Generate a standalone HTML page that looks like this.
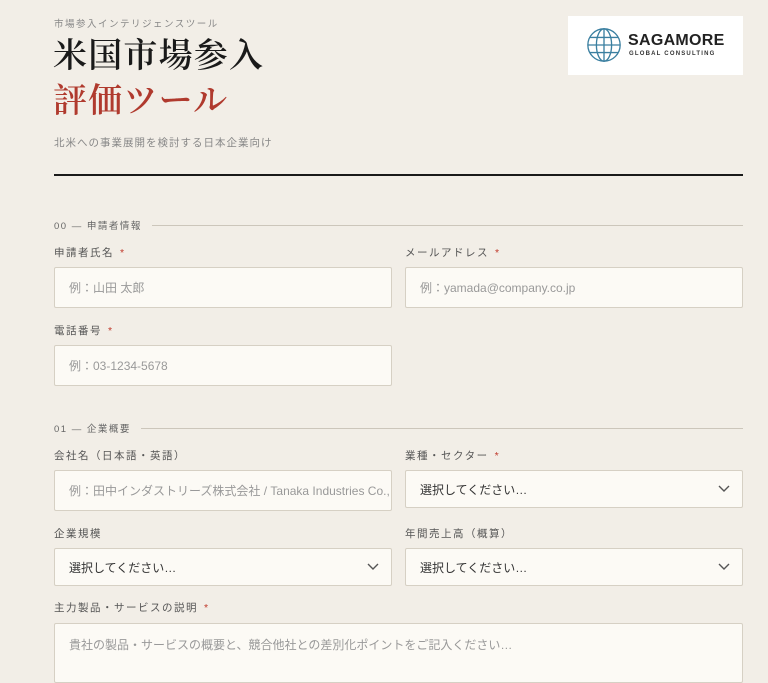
<!DOCTYPE html>
<html><head><meta charset="utf-8"><style>
*{box-sizing:border-box;margin:0;padding:0}
body{width:768px;height:649px;overflow:hidden;background:#f2eee7;font-family:"Liberation Sans","Noto Sans CJK JP",sans-serif;color:#1a1a1a;position:relative}
.a{position:absolute}
.sub{left:54px;top:16px;font-size:9.5px;color:#888;letter-spacing:1.5px}
.t{left:53px;font-family:"Liberation Serif","Noto Serif CJK SC",serif;font-size:34px;font-weight:600;letter-spacing:1.2px;line-height:40px}
.desc{left:54px;top:135px;font-size:10.5px;color:#888;letter-spacing:1px}
.rule{left:54px;top:174px;width:689px;height:2px;background:#1a1a1a}
.logo{left:568px;top:16px;width:175px;height:59px;background:#fff}
.sec{left:54px;font-size:9.5px;color:#666;letter-spacing:1.5px;display:flex;align-items:center;width:689px}
.sec::after{content:"";flex:1;height:1px;background:#ccc6bb;margin-left:10px}
.lab{font-size:10.5px;color:#555;letter-spacing:1.5px}
.lab b{color:#c0392b;font-weight:normal;margin-left:6px}
.in{background:#fcfaf5;border:1px solid #d6d0c4;border-radius:2px;font-size:12px;color:#999;padding-left:14px;display:flex;align-items:center;overflow:hidden;white-space:nowrap}
.sel{color:#333}
.sel svg{position:absolute;right:12px}
</style></head><body>
<div class="a sub">市場参入インテリジェンスツール</div>
<div class="a t" style="top:37px">米国市場参入</div>
<div class="a t" style="top:82px;color:#b03a2e">評価ツール</div>
<div class="a desc">北米への事業展開を検討する日本企業向け</div>
<div class="a rule"></div>
<div class="a logo">
<svg width="38" height="38" viewBox="0 0 40 40" style="position:absolute;left:17px;top:10px" fill="none" stroke="#3a7fa0" stroke-width="1.4"><circle cx="20" cy="20" r="17"/><ellipse cx="20" cy="20" rx="8" ry="17"/><line x1="20" y1="3" x2="20" y2="37"/><path d="M5 12h30M3 20h34M5 28h30"/></svg>
<div class="a" style="left:60px;top:16px;font-size:16px;font-weight:600;color:#222;letter-spacing:0.3px">SAGAMORE</div>
<div class="a" style="left:61px;top:35px;font-size:6px;font-weight:bold;color:#333;letter-spacing:1.2px">GLOBAL CONSULTING</div>
</div>
<div class="a sec" style="top:218px">00 — 申請者情報</div>
<div class="a lab" style="left:54px;top:245px">申請者氏名<b>*</b></div>
<div class="a lab" style="left:405px;top:245px">メールアドレス<b>*</b></div>
<div class="a in" style="left:54px;top:267px;width:338px;height:41px">例：山田 太郎</div>
<div class="a in" style="left:405px;top:267px;width:338px;height:41px">例：yamada@company.co.jp</div>
<div class="a lab" style="left:54px;top:323px">電話番号<b>*</b></div>
<div class="a in" style="left:54px;top:345px;width:338px;height:41px">例：03-1234-5678</div>
<div class="a sec" style="top:421px">01 — 企業概要</div>
<div class="a lab" style="left:54px;top:448px">会社名（日本語・英語）</div>
<div class="a lab" style="left:405px;top:448px">業種・セクター<b>*</b></div>
<div class="a in" style="left:54px;top:470px;width:338px;height:41px">例：田中インダストリーズ株式会社 / Tanaka Industries Co., Ltd.</div>
<div class="a in sel" style="left:405px;top:470px;width:338px;height:38px">選択してください…<svg width="12" height="8" viewBox="0 0 12 8"><path d="M1 1l5 5 5-5" stroke="#555" stroke-width="1.4" fill="none"/></svg></div>
<div class="a lab" style="left:54px;top:526px">企業規模</div>
<div class="a lab" style="left:405px;top:526px">年間売上高（概算）</div>
<div class="a in sel" style="left:54px;top:548px;width:338px;height:38px">選択してください…<svg width="12" height="8" viewBox="0 0 12 8"><path d="M1 1l5 5 5-5" stroke="#555" stroke-width="1.4" fill="none"/></svg></div>
<div class="a in sel" style="left:405px;top:548px;width:338px;height:38px">選択してください…<svg width="12" height="8" viewBox="0 0 12 8"><path d="M1 1l5 5 5-5" stroke="#555" stroke-width="1.4" fill="none"/></svg></div>
<div class="a lab" style="left:54px;top:600px">主力製品・サービスの説明<b>*</b></div>
<div class="a in" style="left:54px;top:623px;width:689px;height:60px;align-items:flex-start;padding-top:12px">貴社の製品・サービスの概要と、競合他社との差別化ポイントをご記入ください…</div>
</body></html>
